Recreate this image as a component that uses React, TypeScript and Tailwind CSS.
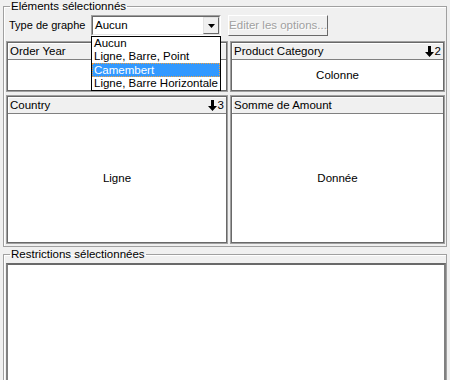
import React from 'react';

function SortMark({ n }: { n: number }) {
  return (
    <span className="flex items-center gap-[1px]">
      <svg width="9" height="11" viewBox="0 0 9 11">
        <path d="M3 0h3v6h3l-4.5 5L0 6h3z" fill="#000" />
      </svg>
      <span>{n}</span>
    </span>
  );
}

function Panel({ title, body, sort }: { title: string; body?: string; sort?: number }) {
  return (
    <div className="flex flex-col border border-[#a0a0a0] bg-white">
      <div className="flex flex-1 flex-col border border-[#696969]">
        <div className="flex h-[17px] items-center justify-between border-b border-[#808080] bg-[#f0f0f0] px-[2px] shadow-[inset_1px_1px_0_#fff]">
          <span>{title}</span>
          {sort && <SortMark n={sort} />}
        </div>
        <div className="flex flex-1 items-center justify-center">{body}</div>
      </div>
    </div>
  );
}

export default function App() {
  const options = ['Aucun', 'Ligne, Barre, Point', 'Camembert', 'Ligne, Barre Horizontale'];

  return (
    <div
      className="h-[380px] w-[450px] overflow-hidden whitespace-nowrap bg-[#f0f0f0] text-[11.5px] leading-[13px] text-black"
      style={{ fontFamily: '"Liberation Sans", Arial, sans-serif' }}
    >
      {/* Eléments sélectionnés */}
      <fieldset className="mx-[3px] h-[247px] w-[444px] border border-[#a0a0a0] shadow-[inset_1px_1px_0_#fff]">
        <legend className="ml-[6px] px-[1px] leading-[13px]">Eléments sélectionnés</legend>

        <div className="mt-[2px] flex items-center pl-[5px]">
          <span className="w-[82px] shrink-0 text-[11px]">Type de graphe</span>

          {/* combo */}
          <div className="relative h-[21px] w-[130px] shrink-0">
            <div className="flex h-full border border-[#a0a0a0] border-b-white border-r-white">
              <div className="flex flex-1 items-center border border-[#696969] border-b-[#e3e3e3] border-r-[#e3e3e3] bg-white">
                <span className="flex-1 pl-[2px]">Aucun</span>
                <div className="flex h-[17px] w-[16px] items-center justify-center border border-[#e3e3e3] border-b-[#696969] border-r-[#696969] bg-[#f0f0f0]">
                  <svg width="7" height="4" viewBox="0 0 7 4">
                    <path d="M0 0h7L3.5 4z" fill="#000" />
                  </svg>
                </div>
              </div>
            </div>

            {/* open list */}
            <div className="absolute left-0 top-[21px] z-10 w-[130px] border border-black bg-white">
              {options.map((o) => (
                <div
                  key={o}
                  className={
                    o === 'Camembert'
                      ? 'h-[14px] border border-dotted border-[#f0a040] bg-[#3399ff] pl-[1px] leading-[12px] text-white'
                      : 'h-[13px] pl-[2px]'
                  }
                >
                  {o}
                </div>
              ))}
            </div>
          </div>

          <div className="ml-[7px] flex h-[21px] w-[100px] shrink-0 items-center justify-center border border-white border-b-[#696969] border-r-[#696969] bg-[#f0f0f0] text-[#a0a0a0] [text-shadow:1px_1px_0_#fff]">
            Editer les options...
          </div>
        </div>

        <div className="mt-[5px] grid grid-cols-[222px_215px] grid-rows-[51px_149px] gap-x-[2px] gap-y-[3px] pl-[2px]">
          <Panel title="Order Year" />
          <Panel title="Product Category" body="Colonne" sort={2} />
          <Panel title="Country" body="Ligne" sort={3} />
          <Panel title="Somme de Amount" body="Donnée" />
        </div>
      </fieldset>

      {/* Restrictions sélectionnées */}
      <fieldset className="mx-[3px] mt-[1px] h-[140px] w-[444px] border border-[#a0a0a0] shadow-[inset_1px_1px_0_#fff]">
        <legend className="ml-[6px] px-[1px] leading-[13px]">Restrictions sélectionnées</legend>
        <div className="ml-[2px] mt-[2px] h-[130px] w-[440px] border-2 border-[#808080] border-t-[#696969] bg-white" />
      </fieldset>
    </div>
  );
}
